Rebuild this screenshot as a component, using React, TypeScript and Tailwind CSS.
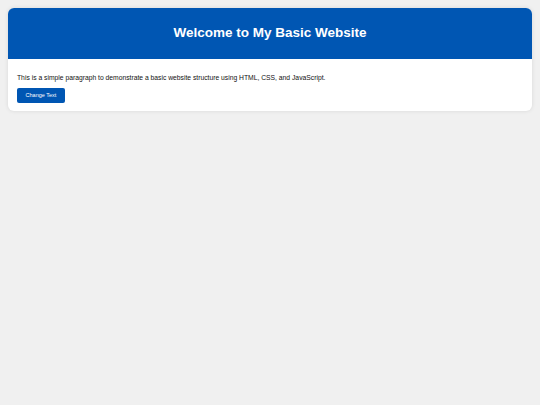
export default function App() {
  return (
    <div
      className="min-h-[405px] bg-[#f0f0f0] p-2"
      style={{ fontFamily: '"Liberation Sans", Arial, sans-serif' }}
    >
      <div className="overflow-hidden rounded-[6px] bg-white shadow-[0_0_4px_rgba(0,0,0,0.1)]">
        <header className="flex h-[51px] items-center justify-center bg-[#0056b3]">
          <h1 className="text-[13.5px] font-bold text-white">Welcome to My Basic Website</h1>
        </header>
        <main className="px-[9px] pb-[8px] pt-[14px]">
          <p className="text-[6.75px] leading-[9px] text-[#111]">
            This is a simple paragraph to demonstrate a basic website structure using HTML, CSS, and JavaScript.
          </p>
          <button className="mt-[6px] block h-[15px] w-[48px] rounded-[2px] bg-[#0056b3] text-[5.5px] text-white">
            Change Text
          </button>
        </main>
      </div>
    </div>
  );
}
